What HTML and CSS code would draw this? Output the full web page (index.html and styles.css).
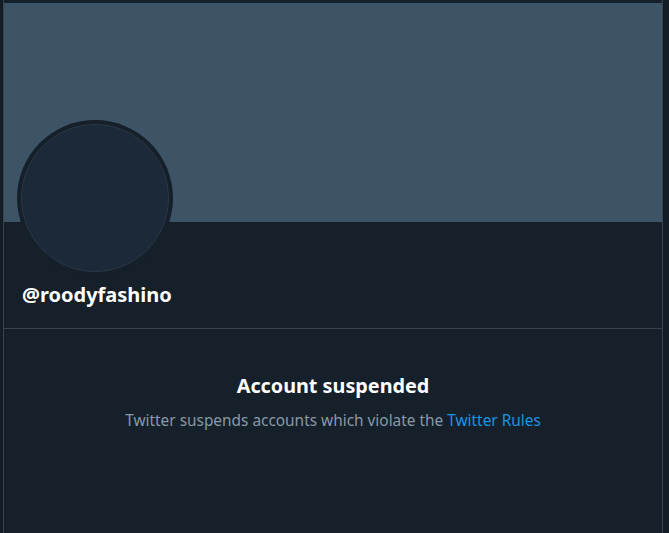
FILE: index.html
```html
<!DOCTYPE html>
<html>
<head>
<meta charset="utf-8">
<link rel="stylesheet" href="styles.css">
</head>
<body>
<div class="column">
  <div class="banner"></div>
  <div class="profile">
    <div class="avatar"><div class="avatar-inner"></div></div>
    <div class="handle">@roodyfashino</div>
  </div>
  <div class="notice">
    <div class="title">Account suspended</div>
    <div class="desc">Twitter suspends accounts which violate the <a href="#" class="link">Twitter Rules</a></div>
  </div>
</div>
</body>
</html>
```
FILE: styles.css
```css
html, body {
  margin: 0;
  padding: 0;
  height: 100%;
  background: #141c25;
  overflow: hidden;
}
body {
  font-family: "Noto Sans", "Open Sans", sans-serif;
}
.column {
  margin-left: 3px;
  width: 660px;
  min-height: 100%;
  border-left: 1px solid #38444d;
  border-right: 1px solid #38444d;
  padding-top: 3px;
  box-sizing: border-box;
  background: #15202b;
}
.banner {
  height: 219px;
  background: #3d5466;
}
.profile {
  display: flex;
  flex-direction: column;
  align-items: flex-start;
  padding: 0 13px;
  border-bottom: 1px solid #38444d;
  height: 106px;
}
.avatar {
  width: 156px;
  height: 156px;
  margin-top: -102px;
  border-radius: 50%;
  background: #15202b;
  padding: 4px;
  box-sizing: border-box;
  flex-shrink: 0;
}
.avatar-inner {
  width: 100%;
  height: 100%;
  border-radius: 50%;
  background: #1c2938;
  border: 1px solid #2a3845;
  box-sizing: border-box;
}
.handle {
  margin-top: 6px;
  margin-left: 5px;
  color: #ffffff;
  font-weight: 700;
  font-size: 20px;
  line-height: 26px;
}
.notice {
  text-align: center;
  padding-top: 44px;
}
.title {
  color: #ffffff;
  font-weight: 700;
  font-size: 19.8px;
  line-height: 26px;
}
.desc {
  margin-top: 12px;
  color: #8899a6;
  font-size: 15.4px;
  line-height: 20px;
}
.link {
  color: #1b95e0;
  text-decoration: none;
}
```
